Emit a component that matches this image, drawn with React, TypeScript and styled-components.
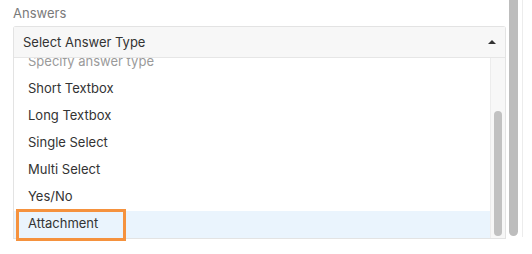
import React from 'react';
import styled, { createGlobalStyle } from 'styled-components';

const GlobalStyle = createGlobalStyle`
  html, body {
    margin: 0;
    padding: 0;
    background: #ffffff;
    font-family: Inter, "Liberation Sans", sans-serif;
  }
`;

const Page = styled.div`
  display: flex;
  width: 532px;
  height: 254px;
  overflow: hidden;
`;

const Main = styled.div`
  width: 493px;
  padding-left: 13px;
`;

const Label = styled.div`
  height: 26px;
  line-height: 26px;
  font-size: 13px;
  color: #7a7a7a;
`;

const SelectBox = styled.div`
  border: 1px solid #e3e3e3;
  border-bottom: 0;
  border-radius: 3px 3px 0 0;
  box-sizing: border-box;
  width: 493px;
`;

const Header = styled.div`
  display: flex;
  align-items: center;
  justify-content: space-between;
  height: 30px;
  padding: 0 9px;
  background: #f7f7f7;
  border-bottom: 1px solid #e6e6e6;
  font-size: 13px;
  color: #333;
`;

const Caret = styled.span`
  width: 0;
  height: 0;
  border-left: 4px solid transparent;
  border-right: 4px solid transparent;
  border-bottom: 4px solid #333;
`;

const List = styled.div`
  display: flex;
  height: 180px;
  border-bottom: 1px solid #e3e3e3;
`;

const Options = styled.div`
  flex: 1;
  position: relative;
  z-index: 1;
  clip-path: inset(0 0 -10px 0);
`;

const OptionsInner = styled.div`
  margin-top: -9px;
`;

const Option = styled.div<{ $placeholder?: boolean; $active?: boolean }>`
  position: relative;
  height: 27px;
  line-height: 25px;
  padding-left: 14px;
  font-size: 13px;
  color: ${(p) => (p.$placeholder ? '#9a9a9a' : '#333')};
  background: ${(p) => (p.$active ? '#eaf4fd' : 'transparent')};
`;

const FocusRing = styled.span`
  position: absolute;
  left: 2px;
  top: -2px;
  width: 110px;
  height: 32px;
  box-sizing: border-box;
  border: 3px solid #f5923e;
`;

const Track = styled.div`
  position: relative;
  width: 14px;
  background: #f7f7f7;
  border-left: 1px solid #ececec;
`;

const Thumb = styled.div`
  position: absolute;
  left: 3px;
  top: 53px;
  width: 8px;
  height: 125px;
  border-radius: 4px;
  background: #c1c1c1;
`;

const PageBar = styled.div`
  position: relative;
  width: 13px;
  height: 237px;
  margin-left: 3px;
  border-right: 1px solid #ececec;
`;

const PageThumb = styled.div`
  position: absolute;
  left: 0;
  top: 0;
  width: 9px;
  height: 236px;
  border-radius: 0 0 5px 5px;
  background: #bdbdbd;
`;

const options = ['Short Textbox', 'Long Textbox', 'Single Select', 'Multi Select', 'Yes/No', 'Attachment'];

export default function App() {
  return (
    <>
      <GlobalStyle />
      <Page>
        <Main>
          <Label>Answers</Label>
          <SelectBox>
            <Header>
              <span>Select Answer Type</span>
              <Caret />
            </Header>
            <List>
              <Options>
                <OptionsInner>
                  <Option $placeholder>Specify answer type</Option>
                  {options.map((o) => (
                    <Option key={o} $active={o === 'Attachment'}>
                      {o}
                      {o === 'Attachment' && <FocusRing />}
                    </Option>
                  ))}
                </OptionsInner>
              </Options>
              <Track>
                <Thumb />
              </Track>
            </List>
          </SelectBox>
        </Main>
        <PageBar>
          <PageThumb />
        </PageBar>
      </Page>
    </>
  );
}
